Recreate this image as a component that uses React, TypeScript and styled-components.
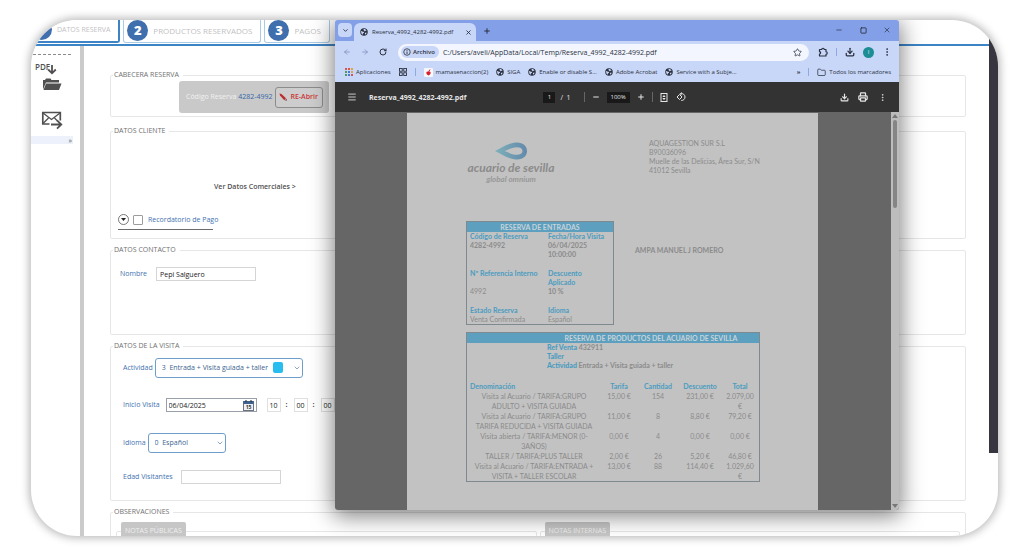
import React from "react";
import styled, { createGlobalStyle, css } from "styled-components";
import {
  ArrowLeft,
  ArrowRight,
  ChevronDown,
  Download,
  EllipsisVertical,
  Folder,
  Menu,
  Minus,
  Plus,
  Printer,
  Puzzle,
  RotateCw,
  Square,
  Star,
  X,
} from "lucide-react";

const GlobalStyle = createGlobalStyle`
  *, *::before, *::after { box-sizing: border-box; }
  body { margin: 0; background: #fff; font-family: "Open Sans", "Noto Sans", sans-serif; }
  button, input, select { font: inherit; color: inherit; margin: 0; }
  a { color: inherit; text-decoration: none; }
`;

const Page = styled.div`
  display: flex;
  height: 100vh;
  padding: 20px 26px 22px 31px;
`;

const Frame = styled.div`
  position: relative;
  flex: 1;
  display: flex;
  min-width: 0;
  overflow: hidden;
  background: #fff;
  border-radius: 46px;
  box-shadow: 0 0 8px 2px rgba(0, 0, 0, 0.28);
`;

const AppColumn = styled.div`
  flex: 1;
  min-width: 0;
  display: flex;
  flex-direction: column;
`;

const EdgeRail = styled.div`
  flex: none;
  width: 9px;
  margin-bottom: 83px;
  background: #37353f;
`;

/* ---------- step tabs ---------- */

const Steps = styled.nav`
  flex: none;
  display: flex;
  gap: 3px;
  height: 26px;
  margin-left: -4px;
  border-bottom: 2px solid #3d84c6;
`;

const Step = styled.button<{ $active?: boolean }>`
  display: flex;
  align-items: center;
  gap: 5px;
  height: 23px;
  padding: 0 8px 2px 3px;
  background: #fff;
  border: solid ${(p) => (p.$active ? "#3d84c6" : "#a9cbe6")};
  border-width: 0 ${(p) => (p.$active ? 2 : 1)}px ${(p) => (p.$active ? 2 : 1)}px 1px;
  border-radius: 0 0 3px 3px;
  color: #bfbfc3;
  font-size: ${(p) => (p.$active ? 7 : 8)}px;
  white-space: nowrap;
`;

const StepNumber = styled.span`
  display: grid;
  place-items: center;
  width: 21px;
  height: 21px;
  border-radius: 50%;
  background: #3f70ad;
  color: #fff;
  font-size: 13px;
  font-weight: 800;
  line-height: 21px;
`;

/* ---------- sidebar ---------- */

const Body = styled.div`
  flex: 1;
  min-height: 0;
  display: flex;
`;

const Sidebar = styled.aside`
  flex: none;
  width: 53px;
  border-right: 4px solid #cbcbcb;
  padding-top: 8px;
`;

const SidebarRule = styled.div`
  margin: 0 9px 0 2px;
  border-top: 1px dashed #8a8a8a;
`;

const SideButton = styled.button`
  display: block;
  margin: 7px 0 18px 3px;
  padding: 0;
  border: 0;
  background: none;
  line-height: 0;
  color: #505050;

  & + & { margin: 0 0 0 3px; }
`;

const SideMore = styled.button`
  display: block;
  width: 42px;
  height: 8px;
  margin-top: 6px;
  padding: 0 1px 0 0;
  border: 0;
  background: #ecf1fb;
  color: #555;
  font-size: 7px;
  line-height: 7px;
  text-align: right;
`;

/* ---------- form ---------- */

const Main = styled.main`
  flex: 1;
  min-width: 0;
  display: flex;
  flex-direction: column;
  gap: 6px;
  padding: 24px 23px 0 26px;
  overflow: hidden;
`;

const Group = styled.fieldset<{ $height: number }>`
  flex: none;
  min-width: 0;
  min-height: ${(p) => p.$height}px;
  margin: 0;
  padding: 0 5px;
  border: 1px solid #e6e6e6;
  border-radius: 2px;
  font-size: 7px;
  line-height: 10px;

  &:first-child { margin-bottom: 3px; }
`;

const GroupTitle = styled.legend`
  margin-left: -3px;
  padding: 0 4px 0 1px;
  color: #707070;
`;

const CodeBar = styled.div`
  display: flex;
  align-items: center;
  gap: 2px;
  width: 150px;
  height: 32px;
  margin: 1px 0 3px 63px;
  padding: 0 6px 0 7px;
  border-radius: 3px;
  background: #c9c9c9;
  color: #f1f1f1;
  white-space: nowrap;
`;

const CodeValue = styled.span`
  color: #3567a8;
`;

const ReopenButton = styled.button`
  display: flex;
  align-items: center;
  justify-content: center;
  gap: 3px;
  flex: 1;
  height: 21px;
  padding: 0;
  border: 1px solid #8c8c8c;
  border-radius: 3px;
  background: #cdcdcd;
  color: #cb3436;
  font-weight: 600;
`;

const DetailsLink = styled.a`
  display: block;
  margin: 46px 0 0 98px;
  color: #505050;
  font-weight: 600;
`;

const Reminder = styled.div`
  display: flex;
  align-items: center;
  gap: 4px;
  width: 95px;
  margin: 22px 0 0 2px;
  padding-bottom: 4px;
  border-bottom: 1px solid #6b6b6b;
  color: #3f72b0;
  white-space: nowrap;

  label { display: flex; align-items: center; gap: 5px; }
  input {
    appearance: none;
    width: 10px;
    height: 10px;
    border: 1px solid #9c9c9c;
    border-radius: 1px;
    background: #fff;
  }
`;

const RoundButton = styled.button`
  display: grid;
  place-items: center;
  flex: none;
  width: 11px;
  height: 11px;
  padding: 0;
  border: 1px solid #777;
  border-radius: 50%;
  background: #fff;
`;

const Row = styled.div<{ $top: number; $gap: number; $indent?: number }>`
  display: flex;
  align-items: center;
  gap: ${(p) => p.$gap}px;
  margin: ${(p) => p.$top}px 0 0 ${(p) => p.$indent ?? 7}px;
  color: #3f72b0;
  white-space: nowrap;
`;

const TextField = styled.input<{ $width: number }>`
  width: ${(p) => p.$width}px;
  height: 14px;
  padding: 0 3px;
  border: 1px solid #d5d5d5;
  border-radius: 0;
  background: #fff;
  color: #222;
`;

const TimeField = styled(TextField)`
  padding: 0;
  border-color: #e0e0e0;
  text-align: center;
`;

const DateBox = styled.span`
  display: flex;
  align-items: center;
  width: 91px;
  height: 14px;
  padding-right: 2px;
  border: 1px solid #9aa0aa;

  input { flex: 1; min-width: 0; height: 12px; padding: 0 2px; border: 0; color: #222; background: none; }
  button { padding: 0; border: 0; background: none; line-height: 0; }
`;

const TimeGroup = styled.span`
  display: flex;
  align-items: center;
  gap: 5px;
  margin-left: 4px;
  color: #333;

  b { width: 3px; }
`;

const SelectBox = styled.span<{ $width: number }>`
  position: relative;
  width: ${(p) => p.$width}px;

  select {
    appearance: none;
    display: block;
    width: 100%;
    height: 20px;
    padding: 0 20px 1px 6px;
    border: 1px solid #6f9dc9;
    border-radius: 3px;
    background: #fff;
    color: #3d6590;
  }
`;

const SelectArrow = styled.span`
  position: absolute;
  right: 2px;
  top: 6px;
  line-height: 0;
  color: #4f7ba8;
  pointer-events: none;
`;

const Swatch = styled.span`
  position: absolute;
  right: 20px;
  top: 4px;
  width: 10px;
  height: 11px;
  border-radius: 2px;
  background: #27bdee;
  pointer-events: none;
`;

const Notes = styled.div`
  display: grid;
  grid-template-columns: 1fr 1fr;
  gap: 3px;
  margin-top: 5px;
`;

const NoteGroup = styled.fieldset`
  min-width: 0;
  height: 60px;
  margin: 0;
  padding: 0 4px;
  border: 1px solid #e6e6e6;
  border-radius: 2px;
`;

const NoteTitle = styled.legend`
  height: 18px;
  padding: 0 4px;
  border-radius: 2px;
  background: #c6c6c6;
  color: #efefef;
  line-height: 18px;
`;

/* ---------- browser window ---------- */

const Window = styled.section`
  position: absolute;
  z-index: 2;
  top: 0;
  bottom: 26px;
  left: 304px;
  right: 99px;
  display: flex;
  flex-direction: column;
  border-radius: 3px;
  overflow: hidden;
  background: #c8d6f8;
  color: #2a3140;
  font-size: 6px;
  box-shadow: 0 4px 22px 2px rgba(0, 0, 0, 0.5);
`;

const TabStrip = styled.div`
  flex: none;
  display: flex;
  align-items: flex-end;
  height: 21px;
  padding: 0 6px 0 3px;
  background: #829fe7;
`;

const iconReset = css`
  display: grid;
  place-items: center;
  flex: none;
  padding: 0;
  border: 0;
  background: none;
  color: inherit;
  line-height: 0;
`;

const IconButton = styled.button`
  ${iconReset}
  width: 12px;
  height: 14px;
`;

const TabMenuButton = styled.button`
  ${iconReset}
  width: 14px;
  height: 14px;
  margin: 0 2px 4px 0;
  border-radius: 4px;
  background: #c8d6f8;
`;

const BrowserTab = styled.div`
  display: flex;
  align-items: center;
  gap: 4px;
  width: 122px;
  height: 18px;
  padding: 0 2px 0 6px;
  border-radius: 6px 6px 0 0;
  background: #c8d6f8;

  span { flex: 1; white-space: nowrap; }
`;

const NewTab = styled.div`
  margin: 0 auto 3px 5px;
`;

const WindowControls = styled.div`
  display: flex;
  gap: 12px;
  margin-bottom: 4px;
`;

const Toolbar = styled.div`
  flex: none;
  display: flex;
  align-items: center;
  height: 22px;
  padding: 0 6px;
`;

const NavButtons = styled.div`
  display: flex;
  gap: 6px;
  margin-right: 9px;
`;

const AddressBar = styled.div`
  flex: 1;
  min-width: 0;
  display: flex;
  align-items: center;
  gap: 4px;
  height: 17px;
  padding: 0 6px 0 3px;
  border-radius: 9px;
  background: #f3f6fe;

  input {
    flex: 1;
    min-width: 0;
    padding: 0;
    border: 0;
    background: none;
    font-size: 7px;
  }
`;

const Chip = styled.span`
  display: flex;
  align-items: center;
  gap: 2px;
  height: 12px;
  padding: 0 4px 0 2px;
  border-radius: 6px;
  background: #c8d6f8;
  font-weight: 600;
`;

const ToolbarEnd = styled.div`
  display: flex;
  align-items: center;
  gap: 7px;
  margin-left: 8px;
`;

const Divider = styled.span<{ $dark?: boolean }>`
  flex: none;
  width: 1px;
  height: ${(p) => (p.$dark ? 10 : 8)}px;
  background: ${(p) => (p.$dark ? "#666" : "#8ea8e6")};
`;

const Avatar = styled.button`
  ${iconReset}
  width: 11px;
  height: 11px;
  border-radius: 50%;
  background: #1c8d94;
  color: #d9f0f0;
`;

const Bookmarks = styled.nav`
  flex: none;
  display: flex;
  align-items: center;
  gap: 8px;
  height: 19px;
  padding: 0 8px 1px 10px;
  white-space: nowrap;
`;

const Bookmark = styled.a`
  display: flex;
  align-items: center;
  gap: 3px;
`;

const BookmarkEnd = styled.div`
  display: flex;
  align-items: center;
  gap: 8px;
  margin-left: auto;
`;

const PdfToolbar = styled.div`
  flex: none;
  display: grid;
  grid-template-columns: 1fr auto 1fr;
  align-items: center;
  height: 30px;
  padding: 0 11px;
  background: #333;
  color: #e6e6e6;
  font-size: 7px;
  white-space: nowrap;
`;

const PdfPart = styled.div<{ $gap: number; $end?: boolean }>`
  display: flex;
  align-items: center;
  justify-content: ${(p) => (p.$end ? "flex-end" : "flex-start")};
  gap: ${(p) => p.$gap}px;
`;

const PdfControls = styled(PdfPart)`
  margin-right: 4px;
`;

const PageCount = styled.span`
  margin-right: 8px;
`;

const PdfTitle = styled.h1`
  margin: 0;
  font-size: 7px;
  font-weight: 700;
`;

const PdfInput = styled.input<{ $width: number }>`
  width: ${(p) => p.$width}px;
  height: 11px;
  padding: 0;
  border: 0;
  background: #191919;
  font-size: 6px;
  text-align: center;
`;

const Viewer = styled.div`
  flex: 1;
  min-height: 0;
  display: flex;
  background: #666;
`;

const PaperArea = styled.div`
  flex: 1;
  min-width: 0;
  padding: 1px 73px 0 72px;
  overflow: hidden;
`;

const ScrollTrack = styled.div`
  flex: none;
  display: flex;
  flex-direction: column;
  align-items: center;
  width: 8px;
  padding: 2px 0;
  gap: 2px;
  background: #bdbdbd;
`;

const ScrollThumb = styled.div`
  width: 4px;
  height: 88px;
  margin-bottom: auto;
  border-radius: 2px;
  background: #858585;
`;

/* ---------- document ---------- */

const Paper = styled.article`
  height: 100%;
  padding: 24px 58px 0 59px;
  background: #c2c2c2;
  color: #8b8b8b;
  font-family: Lato, "Open Sans", sans-serif;
  font-size: 7px;
  line-height: 9px;
`;

const Letterhead = styled.header`
  display: flex;
  justify-content: space-between;
  height: 84px;
`;

const Brand = styled.div`
  display: flex;
  flex-direction: column;
  align-items: center;
  width: 90px;
  padding-top: 5px;
  font-style: italic;
`;

const BrandName = styled.strong`
  margin-top: 2px;
  font-size: 12px;
  line-height: 12px;
  white-space: nowrap;
`;

const BrandSub = styled.span`
  font-size: 8px;
  font-weight: 700;
  line-height: 10px;
  color: #989898;
`;

const Address = styled.address`
  width: 111px;
  padding-top: 2px;
  font-style: normal;
  white-space: nowrap;
`;

const Summary = styled.div`
  display: flex;
  gap: 21px;
`;

const Customer = styled.p`
  margin: 25px 0 0;
  font-weight: 700;
  white-space: nowrap;
`;

const Box = styled.section`
  border: 1px solid #7f8a90;
`;

const SummaryBox = styled(Box)`
  width: 148px;
`;

const ProductsBox = styled(Box)`
  margin-top: 7px;
`;

const BoxTitle = styled.h2<{ $shift?: boolean }>`
  margin: 0;
  padding-left: ${(p) => (p.$shift ? 76 : 0)}px;
  background: #5c9fbf;
  color: #c8d3d8;
  font-size: 7px;
  font-weight: 700;
  line-height: 10px;
  text-align: center;
`;

const InfoTable = styled.table`
  width: 100%;
  border-collapse: collapse;
  table-layout: fixed;

  th, td { padding: 0 0 0 3px; text-align: left; vertical-align: top; }
  th:first-child { width: 78px; white-space: nowrap; }
  th { color: #4b9cc0; }
  tr.group th { padding-top: 10px; }
  td.strong { font-weight: 700; }
`;

const RefList = styled.div`
  padding-left: 80px;
  font-weight: 700;
  margin-bottom: 11px;

  p { margin: 0; }
  b { color: #4b9cc0; }
`;

const ProductTable = styled.table`
  width: 100%;
  border-collapse: collapse;
  table-layout: fixed;
  line-height: 10px;

  th, td { padding: 0 3px; text-align: center; vertical-align: top; }
  th { color: #4b9cc0; }
  th:first-child { width: 134px; text-align: left; }
  th:nth-child(2) { width: 36px; }
  th:nth-child(3), th:nth-child(4) { width: 42px; }
`;

const Globe = () => (
  <svg width="8" height="8" viewBox="0 0 16 16" aria-hidden="true">
    <circle cx="8" cy="8" r="7.5" fill="#2b313e" />
    <path d="M2.5 6c2 0 2.5 1.5 4.500 1.500S8 10 6.500 10.500 6 13 5 13.500C3 12 1.800 9 2.500 6z" fill="#c8d6f8" />
    <path d="M8 2.200c2 0 4 1 5 3-1.500.8-2 .2-3 1.200S8.500 5 7.500 4.500 7 2.800 8 2.200zM10 9.500c1.500-.5 2.500 0 3.600.2C13 11.500 12 12.600 10.500 13.300c-.8-1-.9-2.500-.5-3.800z" fill="#c8d6f8" />
  </svg>
);

const PdfFolderIcon = () => (
  <svg width="30" height="30" viewBox="0 0 30 30" role="img" aria-label="Abrir PDF">
    <text x="1" y="8" fontSize="8" fontWeight="600" fill="#505050" fontFamily="Open Sans">PDF</text>
    <path d="M18 3v8M14.200 7.500L18 11.300l3.800-3.800" fill="none" stroke="currentColor" strokeWidth="1.800" />
    <path d="M9 27.500V18h2l1-1.500h4.500L17.500 18h7.500v2.500H12z" fill="currentColor" />
    <path d="M9.500 28l2.500-6.500h15.500L25 28z" fill="currentColor" />
  </svg>
);

const MailIcon = () => (
  <svg width="30" height="20" viewBox="0 0 30 20" role="img" aria-label="Enviar correo">
    <path d="M15.500 14H8.800V2.500h17.500v8" fill="none" stroke="currentColor" strokeWidth="1.700" />
    <path d="M9 3l8.500 6.500L26 3M9 13.500l5.500-5.500M20.500 8l3 3" fill="none" stroke="currentColor" strokeWidth="1.300" />
    <path d="M17 14.500h10M23 10.300l4.300 4.200-4.300 4.200" fill="none" stroke="currentColor" strokeWidth="1.800" />
  </svg>
);

const CalendarIcon = () => (
  <svg width="11" height="11" viewBox="0 0 11 11" role="img" aria-label="Elegir fecha">
    <rect x="0.5" y="1.5" width="10" height="9" fill="#eef0f4" stroke="#6b7280" />
    <rect x="0.5" y="1" width="10" height="3" fill="#3f618f" />
    <path d="M3 0v2M8 0v2" stroke="#222" />
    <text x="5.5" y="9" fontSize="5" fontWeight="700" textAnchor="middle" fill="#333" fontFamily="Open Sans">15</text>
  </svg>
);

const AppsIcon = () => {
  const colors = ["#d9534f", "#d9534f", "#e0a43a", "#4d9a5b", "#4678d8", "#e0a43a", "#4d9a5b", "#4678d8", "#d9534f"];
  return (
    <svg width="8" height="8" viewBox="0 0 8 8" aria-hidden="true">
      {colors.map((c, i) => (
        <rect key={i} x={(i % 3) * 3} y={Math.floor(i / 3) * 3} width="2" height="2" fill={c} />
      ))}
    </svg>
  );
};

const TabGroupsIcon = () => (
  <svg width="8" height="8" viewBox="0 0 16 16" fill="none" stroke="#2b313e" strokeWidth="1.8" aria-hidden="true">
    <rect x="1" y="1" width="5.5" height="5.5" />
    <rect x="9.5" y="1" width="5.5" height="5.5" />
    <rect x="1" y="9.5" width="5.5" height="5.5" />
    <rect x="9.5" y="9.5" width="5.5" height="5.5" />
  </svg>
);

const HeartFavicon = () => (
  <svg width="9" height="9" viewBox="0 0 18 18" aria-hidden="true">
    <rect width="18" height="18" rx="2" fill="#f7f7fb" />
    <path d="M9 15C5 13 4 9.500 5 8s3-1.500 4 0c1-1.500 3-1.500 4 0s0 5-4 7z" fill="#d8202d" />
    <path d="M9 8l3-5" stroke="#d8202d" strokeWidth="2" />
  </svg>
);

const PencilIcon = () => (
  <svg width="8" height="8" viewBox="0 0 16 16" aria-hidden="true">
    <path d="M1 1l4 1.200 9 8.300-3.500 3.800L2 5z" fill="#c02c30" />
    <path d="M12 14.500l3-3 .5 4z" fill="#6b2020" />
  </svg>
);

const DropLogo = () => (
  <svg width="32" height="18" viewBox="0 0 32 18" role="img" aria-label="Acuario de Sevilla">
    <defs>
      <linearGradient id="drop" x1="0" x2="1">
        <stop offset="0" stopColor="#7fb0b9" />
        <stop offset="1" stopColor="#6289ab" />
      </linearGradient>
    </defs>
    <path
      fillRule="evenodd"
      fill="url(#drop)"
      d="M0 9C6 6 13 1 21 .5c7-.4 11 3.500 11 8.500s-4 8.900-11 8.500C13 17 6 12 0 9zM9.500 9c4 1.500 8 3.800 12.500 3.800 3.500 0 5.500-1.500 5.500-3.800s-2-3.800-5.500-3.800C17.500 5.200 13.500 7.500 9.500 9z"
    />
  </svg>
);

const products = [
  ["Visita al Acuario / TARIFA:GRUPO ADULTO + VISITA GUIADA", "15,00 €", "154", "231,00 €", "2.079,00 €"],
  ["Visita al Acuario / TARIFA:GRUPO TARIFA REDUCIDA + VISITA GUIADA", "11,00 €", "8", "8,80 €", "79,20 €"],
  ["Visita abierta / TARIFA:MENOR (0-3AÑOS)", "0,00 €", "4", "0,00 €", "0,00 €"],
  ["TALLER / TARIFA:PLUS TALLER", "2,00 €", "26", "5,20 €", "46,80 €"],
  ["Visita al Acuario / TARIFA:ENTRADA + VISITA + TALLER ESCOLAR", "13,00 €", "88", "114,40 €", "1.029,60 €"],
];

function ReservationForm() {
  return (
    <Main>
      <Group $height={46}>
        <GroupTitle>CABECERA RESERVA</GroupTitle>
        <CodeBar>
          <span>Código Reserva</span>
          <CodeValue>4282-4992</CodeValue>
          <ReopenButton type="button">
            <PencilIcon />
            RE-Abrir
          </ReopenButton>
        </CodeBar>
      </Group>

      <Group $height={113}>
        <GroupTitle>DATOS CLIENTE</GroupTitle>
        <DetailsLink href="#comerciales">Ver Datos Comerciales &gt;</DetailsLink>
        <Reminder>
          <RoundButton type="button" aria-label="Desplegar">
            <svg width="5" height="3" viewBox="0 0 5 3"><path d="M0 0h5L2.5 3z" fill="#222" /></svg>
          </RoundButton>
          <label>
            <input type="checkbox" />
            Recordatorio de Pago
          </label>
        </Reminder>
      </Group>

      <Group $height={90}>
        <GroupTitle>DATOS CONTACTO</GroupTitle>
        <Row $top={12} $gap={9} $indent={4}>
          <label htmlFor="nombre">Nombre</label>
          <TextField id="nombre" $width={100} defaultValue="Pepi Salguero" />
        </Row>
      </Group>

      <Group $height={160}>
        <GroupTitle>DATOS DE LA VISITA</GroupTitle>
        <Row $top={7} $gap={2}>
          <label htmlFor="actividad">Actividad</label>
          <SelectBox $width={148}>
            <select id="actividad" defaultValue="3">
              <option value="3">3&nbsp; Entrada + Visita guiada + taller</option>
            </select>
            <Swatch />
            <SelectArrow><ChevronDown size={8} /></SelectArrow>
          </SelectBox>
        </Row>
        <Row $top={20} $gap={6}>
          <label htmlFor="inicio">Inicio Visita</label>
          <DateBox>
            <input id="inicio" defaultValue="06/04/2025" />
            <button type="button"><CalendarIcon /></button>
          </DateBox>
          <TimeGroup>
            <TimeField $width={14} aria-label="Hora" defaultValue="10" />
            <b>:</b>
            <TimeField $width={14} aria-label="Minutos" defaultValue="00" />
            <b>:</b>
            <TimeField $width={14} aria-label="Segundos" defaultValue="00" />
          </TimeGroup>
        </Row>
        <Row $top={21} $gap={2}>
          <label htmlFor="idioma">Idioma</label>
          <SelectBox $width={78}>
            <select id="idioma" defaultValue="0">
              <option value="0">0&nbsp; Español</option>
            </select>
            <SelectArrow><ChevronDown size={8} /></SelectArrow>
          </SelectBox>
        </Row>
        <Row $top={17} $gap={8}>
          <label htmlFor="edad">Edad Visitantes</label>
          <TextField id="edad" $width={100} />
        </Row>
      </Group>

      <Group $height={100}>
        <GroupTitle>OBSERVACIONES</GroupTitle>
        <Notes>
          <NoteGroup><NoteTitle>NOTAS PÚBLICAS</NoteTitle></NoteGroup>
          <NoteGroup><NoteTitle>NOTAS INTERNAS</NoteTitle></NoteGroup>
        </Notes>
      </Group>
    </Main>
  );
}

function BookingDocument() {
  return (
    <Paper>
      <Letterhead>
        <Brand>
          <DropLogo />
          <BrandName>acuario de sevilla</BrandName>
          <BrandSub>global omnium</BrandSub>
        </Brand>
        <Address>
          AQUAGESTION SUR S.L<br />B90036096<br />Muelle de las Delicias, Área Sur, S/N<br />41012 Sevilla
        </Address>
      </Letterhead>

      <Summary>
        <SummaryBox>
          <BoxTitle>RESERVA DE ENTRADAS</BoxTitle>
          <InfoTable>
            <tbody>
              <tr><th>Código de Reserva</th><th>Fecha/Hora Visita</th></tr>
              <tr><td className="strong">4282-4992</td><td className="strong">06/04/2025<br />10:00:00</td></tr>
              <tr className="group"><th>Nº Referencia Interno</th><th>Descuento<br />Aplicado</th></tr>
              <tr><td>4992</td><td className="strong">10 %</td></tr>
              <tr className="group"><th>Estado Reserva</th><th>Idioma</th></tr>
              <tr><td>Venta Confirmada</td><td>Español</td></tr>
            </tbody>
          </InfoTable>
        </SummaryBox>
        <Customer>AMPA MANUEL J ROMERO</Customer>
      </Summary>

      <ProductsBox>
        <BoxTitle $shift>RESERVA DE PRODUCTOS DEL ACUARIO DE SEVILLA</BoxTitle>
        <RefList>
          <p><b>Ref Venta</b> 432911</p>
          <p><b>Taller</b></p>
          <p><b>Actividad</b> Entrada + Visita guiada + taller</p>
        </RefList>
        <ProductTable>
          <thead>
            <tr><th>Denominación</th><th>Tarifa</th><th>Cantidad</th><th>Descuento</th><th>Total</th></tr>
          </thead>
          <tbody>
            {products.map((row) => (
              <tr key={row[0]}>{row.map((cell, i) => <td key={i}>{cell}</td>)}</tr>
            ))}
          </tbody>
        </ProductTable>
      </ProductsBox>
    </Paper>
  );
}

function BrowserWindow() {
  return (
    <Window>
      <TabStrip>
        <TabMenuButton aria-label="Buscar pestañas"><ChevronDown size={7} strokeWidth={3} /></TabMenuButton>
        <BrowserTab>
          <Globe />
          <span>Reserva_4992_4282-4992.pdf</span>
          <IconButton aria-label="Cerrar pestaña"><X size={7} strokeWidth={3} /></IconButton>
        </BrowserTab>
        <NewTab><IconButton aria-label="Nueva pestaña"><Plus size={8} strokeWidth={3} /></IconButton></NewTab>
        <WindowControls>
          <IconButton aria-label="Minimizar"><Minus size={8} /></IconButton>
          <IconButton aria-label="Maximizar"><Square size={7} strokeWidth={3} /></IconButton>
          <IconButton aria-label="Cerrar"><X size={8} strokeWidth={2} /></IconButton>
        </WindowControls>
      </TabStrip>

      <Toolbar>
        <NavButtons>
          <IconButton aria-label="Atrás"><ArrowLeft size={8} color="#7284b0" /></IconButton>
          <IconButton aria-label="Adelante"><ArrowRight size={8} color="#7284b0" /></IconButton>
          <IconButton aria-label="Recargar"><RotateCw size={8} strokeWidth={3} /></IconButton>
        </NavButtons>
        <AddressBar>
          <Chip>
            <svg width="8" height="8" viewBox="0 0 16 16" aria-hidden="true">
              <circle cx="8" cy="8" r="6.5" fill="none" stroke="#2b313e" strokeWidth="1.6" />
              <path d="M8 7v5M8 4v1.600" stroke="#2b313e" strokeWidth="1.8" />
            </svg>
            Archivo
          </Chip>
          <input aria-label="Dirección" defaultValue="C:/Users/aveli/AppData/Local/Temp/Reserva_4992_4282-4992.pdf" />
          <IconButton aria-label="Guardar en marcadores"><Star size={9} /></IconButton>
        </AddressBar>
        <ToolbarEnd>
          <IconButton aria-label="Extensiones">
            <svg width="10" height="10" viewBox="0 0 20 20" fill="none" stroke="currentColor" strokeWidth="2.4" strokeLinejoin="round">
              <path d="M3 5h4.500a2.500 2.500 0 0 1 5 0H16v4.500a2.500 2.500 0 0 1 0 5V18H3v-4a2.300 2.300 0 0 0 0-4.600z" />
            </svg>
          </IconButton>
          <Divider />
          <IconButton aria-label="Descargas"><Download size={10} strokeWidth={3} /></IconButton>
          <Avatar aria-label="Perfil">I</Avatar>
          <IconButton aria-label="Menú"><EllipsisVertical size={10} strokeWidth={2} /></IconButton>
        </ToolbarEnd>
      </Toolbar>

      <Bookmarks>
        <Bookmark href="#apps"><AppsIcon />Aplicaciones</Bookmark>
        <TabGroupsIcon />
        <Divider />
        <Bookmark href="#mamas"><HeartFavicon />mamasenaccion(2)</Bookmark>
        <Bookmark href="#siga"><Globe />SIGA</Bookmark>
        <Bookmark href="#enable"><Globe />Enable or disable S...</Bookmark>
        <Bookmark href="#acrobat"><Globe />Adobe Acrobat</Bookmark>
        <Bookmark href="#service"><Globe />Service with a Subje...</Bookmark>
        <BookmarkEnd>
          <b>»</b>
          <Divider />
          <Bookmark href="#todos"><Folder size={9} />Todos los marcadores</Bookmark>
        </BookmarkEnd>
      </Bookmarks>

      <PdfToolbar>
        <PdfPart $gap={11}>
          <IconButton aria-label="Menú lateral"><Menu size={10} /></IconButton>
          <PdfTitle>Reserva_4992_4282-4992.pdf</PdfTitle>
        </PdfPart>
        <PdfControls $gap={5}>
          <PdfInput $width={12} aria-label="Página" defaultValue="1" />
          <PageCount>/&nbsp; 1</PageCount>
          <Divider $dark />
          <IconButton aria-label="Alejar"><Minus size={8} strokeWidth={3} /></IconButton>
          <PdfInput $width={23} aria-label="Zoom" defaultValue="100%" />
          <IconButton aria-label="Acercar"><Plus size={8} strokeWidth={3} /></IconButton>
          <Divider $dark />
          <IconButton aria-label="Ajustar a la página">
            <svg width="8" height="9" viewBox="0 0 16 18" fill="none" stroke="#e6e6e6" strokeWidth="2">
              <rect x="2" y="1" width="12" height="16" />
              <path d="M8 4v3M8 11v3M5.500 7h5M5.500 11h5" />
            </svg>
          </IconButton>
          <IconButton aria-label="Girar">
            <svg width="10" height="10" viewBox="0 0 20 20" fill="none" stroke="#e6e6e6" strokeWidth="2">
              <path d="M7 5l5 5-5 5-5-5zM9 3.500c5-1.500 9 2 9 6.500s-3.500 7-7.500 7M11.500 1L8.500 3.500 11.500 6.500" />
            </svg>
          </IconButton>
        </PdfControls>
        <PdfPart $gap={7} $end>
          <IconButton aria-label="Descargar"><Download size={9} strokeWidth={3} /></IconButton>
          <IconButton aria-label="Imprimir"><Printer size={10} strokeWidth={3} /></IconButton>
          <IconButton aria-label="Más acciones"><EllipsisVertical size={9} strokeWidth={2} /></IconButton>
        </PdfPart>
      </PdfToolbar>

      <Viewer>
        <PaperArea><BookingDocument /></PaperArea>
        <ScrollTrack>
          <svg width="6" height="4" viewBox="0 0 6 4"><path d="M3 0l3 4H0z" fill="#777" /></svg>
          <ScrollThumb />
          <svg width="6" height="4" viewBox="0 0 6 4"><path d="M0 0h6L3 4z" fill="#777" /></svg>
        </ScrollTrack>
      </Viewer>
    </Window>
  );
}

export default function App() {
  return (
    <Page>
      <GlobalStyle />
      <Frame>
        <AppColumn>
          <Steps>
            <Step $active><StepNumber>1</StepNumber>DATOS RESERVA</Step>
            <Step><StepNumber>2</StepNumber>PRODUCTOS RESERVADOS</Step>
            <Step><StepNumber>3</StepNumber>PAGOS</Step>
          </Steps>
          <Body>
            <Sidebar>
              <SidebarRule />
              <SideButton><PdfFolderIcon /></SideButton>
              <SideButton><MailIcon /></SideButton>
              <SideMore aria-label="Más opciones">»</SideMore>
            </Sidebar>
            <ReservationForm />
          </Body>
        </AppColumn>
        <EdgeRail />
        <BrowserWindow />
      </Frame>
    </Page>
  );
}
